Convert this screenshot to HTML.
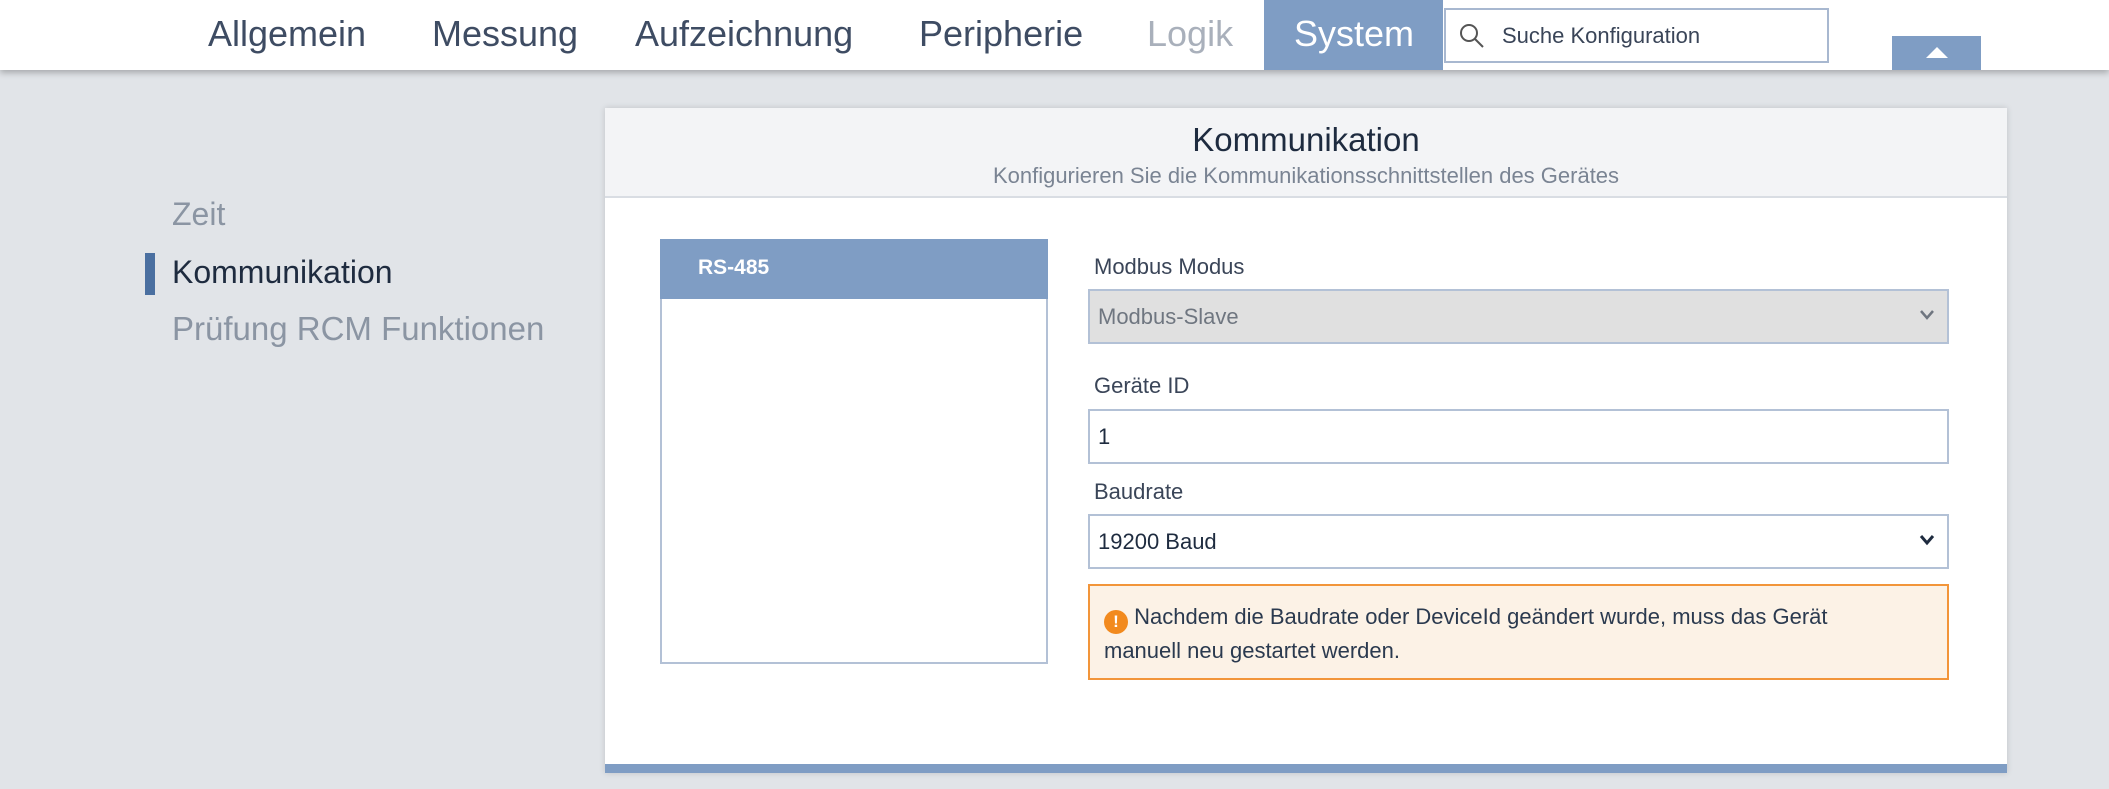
<!DOCTYPE html>
<html><head><meta charset="utf-8"><style>
*{box-sizing:border-box;margin:0;padding:0}
body{width:2109px;height:789px;overflow:hidden;background:#e1e4e8;font-family:"Liberation Sans",sans-serif;position:relative;color:#2b3a4f}
.hdr{position:absolute;left:0;top:0;width:2109px;height:70px;background:#fff;box-shadow:0 3px 6px rgba(0,0,0,.25)}
.nav{position:absolute;top:12px;font-size:36px;color:#3e4c63;line-height:44px}
.sys{position:absolute;left:1264px;top:0;width:179px;height:70px;background:#7f9dc4}
.search{position:absolute;left:1444px;top:8px;width:385px;height:55px;border:2px solid #a8b8d0;background:#fff}
.up{position:absolute;left:1892px;top:36px;width:89px;height:34px;background:#7f9dc4}
.card{position:absolute;left:605px;top:108px;width:1402px;height:665px;background:#fff;box-shadow:0 0 6px rgba(0,0,0,.15)}
.ch{position:absolute;left:0;top:0;width:100%;height:90px;background:#f3f4f6;border-bottom:2px solid #d9dde3;text-align:center}
.lbl{position:absolute;left:1094px;font-size:22px;color:#3a4558}
.box{position:absolute;left:1088px;width:861px;height:55px;border:2px solid #b3c1d6;font-size:22px;padding-left:8px;line-height:51px}
.chev{position:absolute;right:12px;top:18px}
</style></head><body>
<div class="hdr"></div>
<div class="nav" style="left:208px">Allgemein</div>
<div class="nav" style="left:432px">Messung</div>
<div class="nav" style="left:635px">Aufzeichnung</div>
<div class="nav" style="left:919px">Peripherie</div>
<div class="nav" style="left:1147px;color:#a9b0bb">Logik</div>
<div class="sys"></div>
<div class="nav" style="left:1294px;color:#fff">System</div>
<div class="search">
<svg style="position:absolute;left:12px;top:12px" width="28" height="28" viewBox="0 0 28 28"><circle cx="11" cy="11" r="8" fill="none" stroke="#555" stroke-width="2"/><line x1="17" y1="17" x2="25" y2="25" stroke="#555" stroke-width="2"/></svg>
<span style="position:absolute;left:56px;top:13px;font-size:22px;color:#3a4558">Suche Konfiguration</span></div>
<div class="up"><svg style="position:absolute;left:34px;top:9px" width="22" height="14"><path d="M0 13 L11 2 L22 13Z" fill="#fff"/></svg></div>

<div style="position:absolute;left:172px;top:196px;font-size:32px;color:#8b95a3">Zeit</div>
<div style="position:absolute;left:145px;top:253px;width:10px;height:42px;background:#4a6fa0"></div>
<div style="position:absolute;left:172px;top:254px;font-size:32px;color:#1e2b3f">Kommunikation</div>
<div style="position:absolute;left:172px;top:310px;font-size:33px;color:#8b95a3">Prüfung RCM Funktionen</div>

<div class="card">
<div class="ch"><div style="font-size:33px;color:#1e2b3f;padding-top:13px">Kommunikation</div>
<div style="font-size:22px;color:#7a8493;margin-top:4px">Konfigurieren Sie die Kommunikationsschnittstellen des Gerätes</div></div>
<div style="position:absolute;left:0;bottom:0;width:100%;height:9px;background:#7f9dc4"></div>
</div>
<div style="position:absolute;left:660px;top:239px;width:388px;height:425px;border:2px solid #b3c1d6;background:#fff"></div>
<div style="position:absolute;left:660px;top:239px;width:388px;height:60px;background:#7f9dc4;color:#fff;font-weight:bold;font-size:21px;padding:17px 0 0 38px">RS-485</div>

<div class="lbl" style="top:254px">Modbus Modus</div>
<div class="box" style="top:289px;background:#e0e0e0;color:#6f7680">Modbus-Slave<svg class="chev" width="16" height="12"><path d="M2 2 L8 9 L14 2" fill="none" stroke="#6f7680" stroke-width="2.5"/></svg></div>
<div class="lbl" style="top:373px">Geräte ID</div>
<div class="box" style="top:409px;background:#fff;color:#1e2b3f">1</div>
<div class="lbl" style="top:479px">Baudrate</div>
<div class="box" style="top:514px;background:#fff;color:#1e2b3f">19200 Baud<svg class="chev" width="16" height="12"><path d="M2 2 L8 9 L14 2" fill="none" stroke="#1e2b3f" stroke-width="3"/></svg></div>
<div style="position:absolute;left:1088px;top:584px;width:861px;height:96px;border:2px solid #f2953a;background:#fcf2e6;font-size:22px;line-height:34px;color:#2b3a4f;padding:14px 60px 0 14px">
<span style="display:inline-block;width:24px;height:24px;border-radius:50%;background:#f28a1e;color:#fff;font-weight:bold;font-size:17px;text-align:center;line-height:24px;vertical-align:-3px">!</span> Nachdem die Baudrate oder DeviceId geändert wurde, muss das Gerät manuell neu gestartet werden.</div>
</body></html>
